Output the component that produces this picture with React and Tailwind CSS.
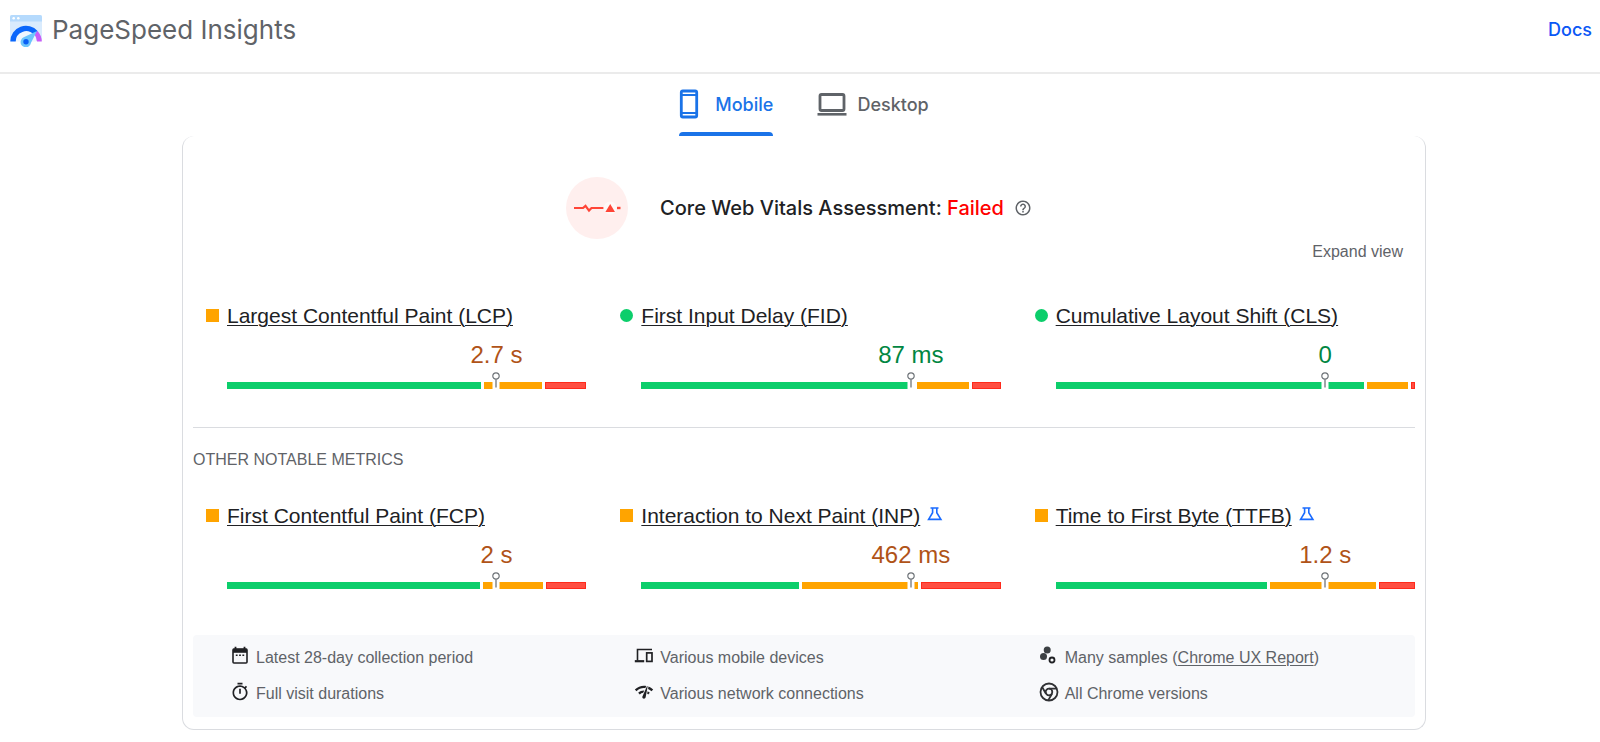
import React from "react";
import { MdOutlineTimer, MdNetworkCheck, MdHelpOutline } from "react-icons/md";

const LEVELS = {
  good: { marker: "rounded-full bg-[#0cce6b]", value: "text-[#018642]" },
  average: { marker: "bg-[#ffa400]", value: "text-[#b05318]" },
};

const CORE = [
  { name: "Largest Contentful Paint (LCP)", value: "2.7 s", level: "average", split: [254, 58, 41] },
  { name: "First Input Delay (FID)", value: "87 ms", level: "good", split: [272, 52, 29] },
  { name: "Cumulative Layout Shift (CLS)", value: "0", level: "good", split: [308, 41, 4] },
];

const OTHER = [
  { name: "First Contentful Paint (FCP)", value: "2 s", level: "average", split: [253, 60, 40] },
  { name: "Interaction to Next Paint (INP)", value: "462 ms", level: "average", split: [158, 115, 80], experimental: true },
  { name: "Time to First Byte (TTFB)", value: "1.2 s", level: "average", split: [211, 106, 36], experimental: true },
];

function Logo() {
  return (
    <svg className="size-8" viewBox="0 0 32 32" aria-hidden="true">
      <path d="M0 2a2 2 0 0 1 2-2h28a2 2 0 0 1 2 2v24H0z" fill="#d9ebfd" />
      <path d="M0 2a2 2 0 0 1 2-2h28a2 2 0 0 1 2 2v4.500H0z" fill="#b5dafd" />
      <circle cx="3.700" cy="3.300" r="1.300" fill="#fff" />
      <circle cx="8.300" cy="3.300" r="1.300" fill="#fff" />
      <path d="M5.500 26.500a10.500 10.500 0 0 1 21 0z" fill="#eef6fe" />
      <path d="M3 26.500a13 13 0 0 1 22.800-8.500" fill="none" stroke="#0a66fb" strokeWidth="5.400" />
      <path d="M25.800 17.500a14 14 0 0 1 3.600 9" fill="none" stroke="#c85cf7" strokeWidth="4.800" />
      <path d="M27 16 13.200 22.600a5.200 5.200 0 1 0 7.700 5.400z" fill="#6cc5fc" />
      <circle cx="16" cy="26.700" r="2.700" fill="#0a5ff5" />
    </svg>
  );
}

function PhoneIcon() {
  return (
    <svg className="h-[30px] w-5" viewBox="0 0 20 30" fill="none" stroke="currentColor" aria-hidden="true">
      <rect x="2.300" y="2" width="15.400" height="26" rx="1.500" strokeWidth="2.800" />
      <path d="M2 6h16M2 24h16" strokeWidth="1.800" />
    </svg>
  );
}

function LaptopIcon() {
  return (
    <svg className="h-6 w-[30px]" viewBox="0 0 30 24" fill="none" stroke="currentColor" aria-hidden="true">
      <rect x="3" y="2.500" width="24" height="16" rx="1.500" strokeWidth="2.800" />
      <path d="M.5 22.300h29" strokeWidth="2.600" />
    </svg>
  );
}

function VitalsBadge() {
  return (
    <svg className="size-[62px]" viewBox="0 0 62 62" aria-hidden="true">
      <circle cx="31" cy="31" r="31" fill="#ffefee" />
      <path d="M8 31h9l2.500-2.200 3.500 4.800 2.500-2.600H37.500" fill="none" stroke="#ff4537" strokeWidth="2.200" />
      <path d="M51 31h3.500" stroke="#ff4537" strokeWidth="2.400" />
      <circle cx="44.200" cy="31" r="6.500" fill="#fff8f7" />
      <path d="M44.200 27l4.800 8h-9.600z" fill="#ff4537" />
    </svg>
  );
}

function FlaskIcon() {
  return (
    <svg className="h-3.5 w-4" viewBox="0 0 16 14" fill="none" stroke="#1a6bff" strokeWidth="1.600" aria-label="Experimental">
      <path d="M3.500 1h8M5.600 1v4.700L1.600 12.400h12.300L9.800 5.700V1" />
    </svg>
  );
}

function CalendarIcon() {
  return (
    <svg className="size-5" viewBox="0 0 20 20" fill="none" stroke="#202124" aria-hidden="true">
      <rect x="3" y="3" width="14" height="14" rx="1" strokeWidth="1.600" />
      <path d="M3 4.800h14" strokeWidth="4" />
      <path d="M5.500 .8v3M14.500 .8v3" strokeWidth="1.800" />
      <path d="M5.800 9.300h1.800M9.100 9.300h1.800M12.400 9.300h1.800" strokeWidth="1.600" />
    </svg>
  );
}

function DevicesIcon() {
  return (
    <svg className="size-5" viewBox="0 0 20 20" fill="none" stroke="#202124" aria-hidden="true">
      <path d="M18 3.500H3.500V14.500" strokeWidth="1.600" />
      <path d="M.8 15.200h9.400" strokeWidth="2.200" />
      <rect x="12.700" y="6.900" width="5.300" height="8.500" strokeWidth="1.700" />
    </svg>
  );
}

function SamplesIcon() {
  return (
    <svg className="size-5" viewBox="0 0 20 20" fill="#3c4043" aria-hidden="true">
      <circle cx="8.200" cy="4" r="3.500" />
      <circle cx="4.500" cy="10.600" r="3.500" />
      <circle cx="13" cy="14" r="2.500" fill="none" stroke="#202124" strokeWidth="1.800" />
    </svg>
  );
}

function ChromeIcon() {
  return (
    <svg className="size-5" viewBox="0 0 20 20" fill="none" stroke="#303134" strokeWidth="1.800" aria-hidden="true">
      <circle cx="10" cy="10" r="8.500" />
      <circle cx="10" cy="10" r="3.300" />
      <path d="M10 6.600h7.700M7 11.800 3.100 5M13 11.800 9.200 18.400" />
    </svg>
  );
}

function Metric({ name, value, level, split, experimental }) {
  return (
    <article>
      <div className="flex h-7 items-center">
        <span className={`mr-2 mb-0.5 size-[13px] shrink-0 ${LEVELS[level].marker}`} />
        <h3 className="text-[21px] leading-7 whitespace-nowrap text-[#202124]">
          <a href="#metric" className="underline decoration-1 underline-offset-2">
            {name}
          </a>
        </h3>
        {experimental && (
          <span className="mb-1 ml-[7px]">
            <FlaskIcon />
          </span>
        )}
      </div>
      <div className="pl-[21px]">
        <p className={`mt-[9px] ml-auto w-1/2 text-center text-2xl leading-8 ${LEVELS[level].value}`}>{value}</p>
        <div className="relative pt-[11px]">
          <div className="flex h-[7px] gap-[3px]">
            <span className="bg-[#0cce6b]" style={{ flex: split[0] }} />
            <span className="bg-[#ffa400]" style={{ flex: split[1] }} />
            <span className="bg-[#ff4e42] inset-ring inset-ring-[#ff2a1c]" style={{ flex: split[2] }} />
          </div>
          <div className="absolute bottom-0 left-3/4 flex h-[7px] w-[7px] -translate-x-1/2 items-end justify-center bg-white">
            <svg className="h-[17px] w-[9px] shrink-0" viewBox="0 0 9 17" fill="none" stroke="#70757a" aria-hidden="true">
              <circle cx="4.500" cy="4" r="3.200" strokeWidth="1.200" fill="#fff" />
              <path d="M4.500 7.200V15.500" strokeWidth="1.300" />
            </svg>
          </div>
        </div>
      </div>
    </article>
  );
}

function Note({ icon, children }) {
  return (
    <li className="flex h-9 items-center pl-7 text-base text-[#5f6368]">
      <span className="mr-1.5 mb-1 flex w-5 shrink-0 justify-center text-xl text-[#202124]">{icon}</span>
      <span>{children}</span>
    </li>
  );
}

export default function App() {
  return (
    <div className="bg-white font-['Liberation_Sans',Arial,sans-serif]">
      <header className="flex h-[74px] items-start justify-between border-b-2 border-[#ebebeb] px-2 pt-3 font-['Inter',sans-serif]">
        <div className="flex items-center gap-2.5 pl-0.5">
          <div className="pt-0.5">
            <Logo />
          </div>
          <span className="text-[26px] leading-9 text-[#5f6368]">PageSpeed Insights</span>
        </div>
        <a href="#docs" className="text-[18px] leading-9 font-medium text-[#0b57f5]">
          Docs
        </a>
      </header>

      <main className="pb-3 pl-2">
        <div className="flex justify-center gap-11 font-['Inter',sans-serif] text-[18px] font-medium">
          <button type="button" className="flex flex-col text-[#1a73e8]">
            <span className="flex h-[58px] items-center pt-0.5">
              <PhoneIcon />
              <span className="ml-4">Mobile</span>
            </span>
            <span className="h-1 w-full rounded-t-sm bg-[#1a73e8]" />
          </button>
          <button type="button" className="flex flex-col text-[#5f6368]">
            <span className="flex h-[58px] items-center pt-0.5">
              <LaptopIcon />
              <span className="ml-2.5">Desktop</span>
            </span>
          </button>
        </div>

        <section className="mx-auto max-w-[1244px] rounded-xl border border-t-0 border-[#dadce0] px-2.5 pb-3">
          <div className="flex items-center justify-center pt-[41px] pr-2.5 font-['Inter',sans-serif]">
            <VitalsBadge />
            <h2 className="ml-8 text-xl font-medium text-[#202124]">
              Core Web Vitals Assessment: <span className="text-[#f00]">Failed</span>
            </h2>
            <button type="button" aria-label="Help" className="ml-2.5 text-[18px] text-[#5f6368]">
              <MdHelpOutline />
            </button>
          </div>
          <div className="flex justify-end pr-3">
            <button type="button" className="h-[26px] text-base leading-[26px] text-[#5f6368]">
              Expand view
            </button>
          </div>

          <div className="grid grid-cols-3 gap-x-[34px] border-b border-[#dadce0] pt-[37px] pb-[38px] pl-[13px]">
            {CORE.map((m) => (
              <Metric key={m.name} {...m} />
            ))}
          </div>
          <h3 className="pt-5 text-base text-[#5f6368] uppercase">Other Notable Metrics</h3>
          <div className="grid grid-cols-3 gap-x-[34px] pt-[30px] pb-[46px] pl-[13px]">
            {OTHER.map((m) => (
              <Metric key={m.name} {...m} />
            ))}
          </div>

          <ul className="grid grid-cols-3 rounded bg-[#f8f9fb] py-[5px] pl-[9px]">
            <Note icon={<CalendarIcon />}>Latest 28-day collection period</Note>
            <Note icon={<DevicesIcon />}>Various mobile devices</Note>
            <Note icon={<SamplesIcon />}>
              Many samples (
              <a href="#report" className="underline underline-offset-2">
                Chrome UX Report
              </a>
              )
            </Note>
            <Note icon={<MdOutlineTimer />}>Full visit durations</Note>
            <Note icon={<MdNetworkCheck />}>Various network connections</Note>
            <Note icon={<ChromeIcon />}>All Chrome versions</Note>
          </ul>
        </section>
      </main>
    </div>
  );
}
